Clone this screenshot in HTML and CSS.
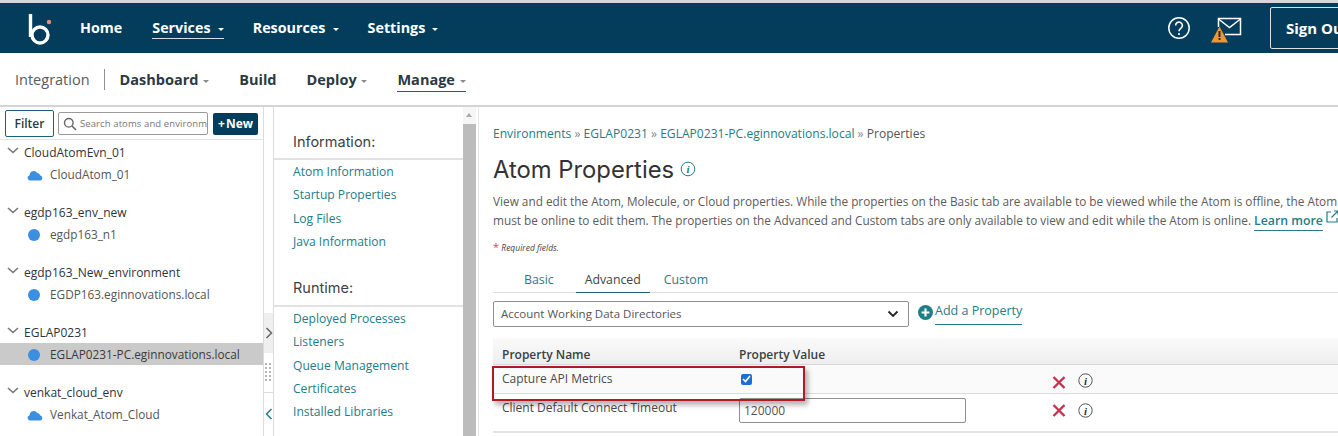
FILE: index.html
```html
<!DOCTYPE html>
<html lang="en">
<head>
<meta charset="utf-8">
<title>Atom Properties</title>
<link rel="stylesheet" href="styles.css">
</head>
<body>
<div class="page">
  <header class="topbar">
    <svg class="logo" width="28" height="32" viewBox="0 0 28 32" aria-hidden="true">
      <path d="M3.5 1v23" fill="none" stroke="#fff" stroke-width="3.4"/>
      <circle cx="13" cy="22" r="8" fill="none" stroke="#fff" stroke-width="3.4"/>
      <circle cx="22" cy="9" r="2.2" fill="#f08a78"/>
    </svg>
    <nav class="mainnav">
      <a class="mainlink">Home</a>
      <a class="mainlink mainlink-active">Services <i class="caret"></i></a>
      <a class="mainlink">Resources <i class="caret"></i></a>
      <a class="mainlink">Settings <i class="caret"></i></a>
    </nav>
    <div class="topright">
      <svg class="help" width="24" height="24" viewBox="0 0 24 24" aria-hidden="true">
        <circle cx="12" cy="12" r="10.2" fill="none" stroke="#fff" stroke-width="1.5"/>
        <path d="M8.6 9.4a3.4 3.4 0 1 1 5.4 2.8c-1.3.9-2 1.5-2 3" fill="none" stroke="#fff" stroke-width="1.6"/>
        <circle cx="12" cy="18" r="1.1" fill="#fff"/>
      </svg>
      <svg class="mail" width="32" height="28" viewBox="0 0 32 28" aria-hidden="true">
        <path d="M7.5 11V2.500h22v16H14" fill="none" stroke="#fff" stroke-width="1.500"/>
        <path d="M7.500 3l11 8.500 11-8.500" fill="none" stroke="#fff" stroke-width="1.500"/>
        <path d="M8.500 10.500L17 26.500H0z" fill="#f0962e"/>
        <rect x="7.500" y="15" width="2" height="6" fill="#2b2b2b"/>
        <rect x="7.500" y="22" width="2" height="2" fill="#2b2b2b"/>
      </svg>
      <a class="signout">Sign Out</a>
    </div>
  </header>

  <nav class="subnav">
    <span class="product">Integration</span>
    <a class="sublink sublink-first">Dashboard <i class="caret caret-gray"></i></a>
    <a class="sublink">Build</a>
    <a class="sublink">Deploy <i class="caret caret-gray"></i></a>
    <a class="sublink sublink-active">Manage <i class="caret caret-gray"></i></a>
  </nav>

  <main class="workspace">
    <aside class="sidebar">
      <div class="toolbar">
        <button class="filter">Filter</button>
        <div class="search">
          <svg width="14" height="14" viewBox="0 0 14 14" aria-hidden="true"><circle cx="5.800" cy="5.800" r="4.300" fill="none" stroke="#666" stroke-width="1.400"/><path d="M9 9l4 4" stroke="#666" stroke-width="1.600"/></svg>
          <span class="search-text">Search atoms and environm</span>
        </div>
        <button class="new"><span class="plus">+</span>New</button>
      </div>
      <ul class="tree">
        <li class="group">
          <div class="env"><svg class="chev" width="12" height="7" viewBox="0 0 12 7"><path d="M1 1l5 4.500L11 1" fill="none" stroke="#777" stroke-width="1.600"/></svg>CloudAtomEvn_01</div>
          <div class="atom"><svg class="cloud" width="16" height="11" viewBox="0 0 16 11"><path d="M3 10.500a2.700 2.700 0 0 1-.4-5.300A4.200 4.200 0 0 1 10.300 3a3.600 3.600 0 0 1 3 2.600 2.500 2.500 0 0 1 0 4.900z" fill="#3b8fe0"/></svg>CloudAtom_01</div>
        </li>
        <li class="group">
          <div class="env"><svg class="chev" width="12" height="7" viewBox="0 0 12 7"><path d="M1 1l5 4.500L11 1" fill="none" stroke="#777" stroke-width="1.600"/></svg>egdp163_env_new</div>
          <div class="atom"><span class="dot"></span>egdp163_n1</div>
        </li>
        <li class="group">
          <div class="env"><svg class="chev" width="12" height="7" viewBox="0 0 12 7"><path d="M1 1l5 4.500L11 1" fill="none" stroke="#777" stroke-width="1.600"/></svg>egdp163_New_environment</div>
          <div class="atom"><span class="dot"></span>EGDP163.eginnovations.local</div>
        </li>
        <li class="group">
          <div class="env"><svg class="chev" width="12" height="7" viewBox="0 0 12 7"><path d="M1 1l5 4.500L11 1" fill="none" stroke="#777" stroke-width="1.600"/></svg>EGLAP0231</div>
          <div class="atom atom-selected"><span class="dot"></span>EGLAP0231-PC.eginnovations.local</div>
        </li>
        <li class="group">
          <div class="env"><svg class="chev" width="12" height="7" viewBox="0 0 12 7"><path d="M1 1l5 4.500L11 1" fill="none" stroke="#777" stroke-width="1.600"/></svg>venkat_cloud_env</div>
          <div class="atom"><svg class="cloud" width="16" height="11" viewBox="0 0 16 11"><path d="M3 10.500a2.700 2.700 0 0 1-.4-5.300A4.200 4.200 0 0 1 10.300 3a3.600 3.600 0 0 1 3 2.600 2.500 2.500 0 0 1 0 4.900z" fill="#3b8fe0"/></svg>Venkat_Atom_Cloud</div>
        </li>
      </ul>
    </aside>

    <div class="splitter">
      <div class="split-top"></div>
      <div class="split-expand"><svg width="8" height="12" viewBox="0 0 8 12"><path d="M1.500 1l5 5-5 5" fill="none" stroke="#666" stroke-width="1.500"/></svg></div>
      <div class="split-grip"><span class="grip-dots"></span></div>
      <div class="split-collapse"><svg width="8" height="12" viewBox="0 0 8 12"><path d="M6.500 1l-5 5 5 5" fill="none" stroke="#1d7f86" stroke-width="1.500"/></svg></div>
    </div>

    <section class="menu">
      <h2 class="menu-title">Information:</h2>
      <ul class="menu-list">
        <li>Atom Information</li>
        <li>Startup Properties</li>
        <li>Log Files</li>
        <li>Java Information</li>
      </ul>
      <h2 class="menu-title menu-title-next">Runtime:</h2>
      <ul class="menu-list">
        <li>Deployed Processes</li>
        <li>Listeners</li>
        <li>Queue Management</li>
        <li>Certificates</li>
        <li>Installed Libraries</li>
      </ul>
    </section>

    <div class="scrollbar">
      <div class="scroll-up"></div>
      <div class="scroll-thumb"></div>
    </div>

    <section class="content">
      <p class="crumbs"><a>Environments</a> <span class="sep">»</span> <a>EGLAP0231</a> <span class="sep">»</span> <a>EGLAP0231-PC.eginnovations.local</a> <span class="sep">»</span> Properties</p>
      <h1 class="title">Atom Properties
        <svg class="title-info" width="16" height="16" viewBox="0 0 16 16" aria-hidden="true"><circle cx="8" cy="8" r="6.800" fill="none" stroke="#1d7f86" stroke-width="1"/><text x="8" y="12" text-anchor="middle" class="info-i info-i-teal">i</text></svg>
      </h1>
      <p class="desc">View and edit the Atom, Molecule, or Cloud properties. While the properties on the Basic tab are available to be viewed while the Atom is offline, the Atom</p>
      <p class="desc desc-next">must be online to edit them. The properties on the Advanced and Custom tabs are only available to view and edit while the Atom is online. <a class="learn">Learn more</a> <svg class="ext" width="13" height="13" viewBox="0 0 13 13" aria-hidden="true"><path d="M5 2H1v10h10V8" fill="none" stroke="#1d7f86" stroke-width="1.200"/><path d="M5.500 7.500L12 1M8 1h4v4" fill="none" stroke="#1d7f86" stroke-width="1.200"/></svg></p>
      <p class="required"><span class="star">*</span> Required fields.</p>
      <div class="tabs">
        <a class="tab">Basic</a>
        <a class="tab tab-active">Advanced</a>
        <a class="tab">Custom</a>
      </div>
      <div class="addrow">
        <div class="select">Account Working Data Directories
          <svg width="12" height="8" viewBox="0 0 12 8" aria-hidden="true"><path d="M1.500 1.500L6 6l4.500-4.500" fill="none" stroke="#222" stroke-width="1.800"/></svg>
        </div>
        <svg class="addicon" width="15" height="15" viewBox="0 0 15 15" aria-hidden="true"><circle cx="7.500" cy="7.500" r="7.500" fill="#1d7f86"/><path d="M7.500 3.500v8M3.500 7.500h8" stroke="#fff" stroke-width="2.200"/></svg>
        <a class="addlink">Add a Property</a>
      </div>
      <div class="table">
        <div class="row row-head"><span class="c-name">Property Name</span><span class="c-value">Property Value</span></div>
        <div class="row row-one">
          <span class="c-name">Capture API Metrics</span>
          <span class="c-value"><span class="check"><svg width="9" height="8" viewBox="0 0 9 8"><path d="M1 4l2.500 2.500L8 1" fill="none" stroke="#fff" stroke-width="1.700"/></svg></span></span>
          <svg class="cross" width="14" height="13" viewBox="0 0 14 13" aria-hidden="true"><path d="M1.500 1l11 11M12.500 1l-11 11" stroke="#c8324f" stroke-width="2.400"/></svg>
          <svg class="rowinfo" width="15" height="15" viewBox="0 0 15 15" aria-hidden="true"><circle cx="7.500" cy="7.500" r="6.700" fill="none" stroke="#555" stroke-width="1"/><text x="7.500" y="11.500" text-anchor="middle" class="info-i">i</text></svg>
        </div>
        <div class="row row-two">
          <span class="c-name c-name-top">Client Default Connect Timeout</span>
          <span class="c-value"><span class="textbox">120000</span></span>
          <svg class="cross" width="14" height="13" viewBox="0 0 14 13" aria-hidden="true"><path d="M1.500 1l11 11M12.500 1l-11 11" stroke="#c8324f" stroke-width="2.400"/></svg>
          <svg class="rowinfo" width="15" height="15" viewBox="0 0 15 15" aria-hidden="true"><circle cx="7.500" cy="7.500" r="6.700" fill="none" stroke="#555" stroke-width="1"/><text x="7.500" y="11.500" text-anchor="middle" class="info-i">i</text></svg>
        </div>
        <div class="highlight"></div>
      </div>
    </section>
  </main>
</div>
</body>
</html>
```

FILE: styles.css
```css
* { box-sizing: border-box; }
html, body { margin: 0; padding: 0; height: 100%; overflow: hidden; background: #fff; }
body { font-family: "Open Sans", "Liberation Sans", sans-serif; color: #3a3a3a; }
ul { list-style: none; margin: 0; padding: 0; }
h1, h2, p { margin: 0; }
a { color: inherit; text-decoration: none; }

.page { width: 1338px; height: 436px; display: flex; flex-direction: column; border-top: 3px solid #d6d6d6; overflow: hidden; }

.topbar { flex: 0 0 50px; background: #033d5b; display: flex; align-items: center; color: #fff; padding-left: 27px; }
.logo { flex: none; margin-top: 1px; }
.mainnav { display: flex; margin-left: 25px; gap: 29px; }
.mainlink { font-size: 14.3px; font-weight: 700; line-height: 19px; padding-bottom: 1px; border-bottom: 1px solid transparent; white-space: nowrap; }
.mainlink:first-child { margin-right: 1px; }
.mainlink-active { border-bottom-color: #cfe0e8; }
.caret { display: inline-block; width: 0; height: 0; border-left: 3.5px solid transparent; border-right: 3.5px solid transparent; border-top: 3.5px solid currentColor; vertical-align: 2px; margin-left: 3.5px; }
.caret-gray { color: #8a8a8a; margin-left: 1px; }
.topright { margin-left: auto; display: flex; align-items: center; flex: none; width: 171px; }
.help { margin-right: 20px; flex: none; }
.mail { margin-right: 27px; margin-top: 4px; flex: none; }
.signout { flex: none; width: 90px; height: 42px; margin-top: 0; border: 1px solid #d6e2e8; border-radius: 2px; font-size: 15px; font-weight: 700; line-height: 40px; padding-left: 15px; white-space: nowrap; }

.subnav { flex: 0 0 52px; display: flex; align-items: center; padding-left: 15px; font-size: 14.5px; color: #2b3a42; }
.product { font-size: 14.5px; color: #5a5a62; padding-right: 14px; border-right: 1px solid #8f8f8f; line-height: 21px; }
.sublink { font-weight: 700; margin-top: 4px; margin-left: 30px; line-height: 20px; padding: 0 0 1px; border-bottom: 1px solid transparent; white-space: nowrap; }
.sublink-first { margin-left: 15px; }
.sublink-active { border-bottom-color: #1f5f78; }

.workspace { flex: 1; min-height: 0; display: flex; border-top: 2px solid #d4d4d4; }

.sidebar { flex: 0 0 264px; border-right: 1px solid #dcdcdc; overflow: hidden; }
.toolbar { display: flex; align-items: center; height: 33px; padding-left: 5px; border-bottom: 1px solid #e3e3e3; }
.filter { width: 49px; height: 27px; padding: 0; background: #fff; border: 1px solid #1f5f78; border-radius: 2px; font: 600 12px "Open Sans", sans-serif; color: #2b3a42; flex: none; }
.search { width: 150px; height: 23px; margin-left: 4px; margin-top: 1px; border: 1px solid #9a9a9a; border-radius: 2px; display: flex; align-items: center; padding-left: 4px; gap: 3px; overflow: hidden; flex: none; }
.search svg { flex: none; }
.search-text { font-size: 9.5px; color: #777; white-space: nowrap; letter-spacing: .1px; }
.new { width: 45px; height: 22px; margin-left: 5px; margin-top: 1px; padding: 0; background: #033d5b; border: 0; border-radius: 2px; color: #fff; font: 700 12px "Open Sans", sans-serif; flex: none; }
.plus { margin-right: 1px; }

.tree { padding-top: 2px; }
.group { height: 60px; }
.env { display: flex; align-items: center; height: 20px; font-size: 12px; color: #2f3438; font-weight: 500; padding-left: 7px; white-space: nowrap; }
.chev { margin-right: 5px; flex: none; margin-top: -3px; }
.atom { display: flex; align-items: center; height: 22px; margin-top: 1px; font-size: 11.8px; color: #555; padding-left: 27px; white-space: nowrap; }
.atom-selected { background: #cacaca; color: #3a3a3a; }
.dot { width: 12px; height: 12px; border-radius: 50%; background: #3b8fe0; margin: 1px 10px 0 1px; flex: none; }
.cloud { margin-right: 7px; flex: none; margin-top: 2px; }

.splitter { flex: 0 0 10px; display: flex; flex-direction: column; background: #fff; border-right: 1px solid #dcdcdc; }
.split-top { flex: 0 0 206px; }
.split-expand { flex: 0 0 40px; background: #efefef; display: flex; align-items: center; justify-content: center; }
.split-grip { flex: 0 0 40px; padding-top: 9px; border-bottom: 1px solid #dcdcdc; }
.grip-dots { display: block; height: 20px; background-image: radial-gradient(circle, #b5b5b5 1px, transparent 1.2px); background-size: 4px 4px; }
.split-collapse { flex: 1; display: flex; justify-content: center; padding-top: 15px; }

.menu { flex: 0 0 189px; padding-top: 25px; overflow: hidden; }
.menu-title { font: 400 14.5px/20px Inter, "Open Sans", sans-serif; color: #3f3f46; padding: 0 0 6px 19px; border-bottom: 2px solid #e2e2e2; }
.menu-title-next { margin-top: 25px; padding-bottom: 7px; }
.menu-list { padding: 0 0 0 19px; }
.menu-list li { font-size: 12.1px; font-weight: 500; line-height: 23.3px; color: #257c88; white-space: nowrap; }

.scrollbar { flex: 0 0 13px; display: flex; flex-direction: column; margin-right: 3px; background: #f6f6f6; }
.scroll-up { flex: 0 0 17px; position: relative; }
.scroll-up::after { content: ""; position: absolute; left: 3px; top: 6px; border-left: 3.5px solid transparent; border-right: 3.5px solid transparent; border-bottom: 4px solid #aaa; }
.scroll-thumb { flex: 1; background: #bcbcbc; }

.content { flex: 1; min-width: 0; padding: 19px 0 0 14px; border-left: 1px solid #e6e6e6; margin-left: -1px; overflow: hidden; }
.crumbs { font-size: 12.08px; line-height: 16px; color: #555; white-space: nowrap; }
.crumbs a { color: #257c88; }
.sep { color: #888; }
.title { margin-top: 13px; height: 30px; font: 400 23.8px/30px Inter, "Open Sans", sans-serif; color: #333; white-space: nowrap; display: flex; align-items: center; gap: 6px; }
.title-info { margin-top: -2px; }
.info-i { font: italic 700 11px "Liberation Serif", serif; fill: #333; }
.info-i-teal { fill: #1d7f86; }
.desc { margin-top: 7px; height: 18px; font-size: 11.8px; line-height: 18px; color: #5c5c5c; white-space: nowrap; }
.desc-next { margin-top: 0; }
.learn { color: #257c88; font-weight: 600; font-size: 12.3px; border-bottom: 1px solid #257c88; padding-bottom: 1px; }
.ext { vertical-align: 2px; }
.required { margin-top: 12px; height: 14px; font-size: 8.5px; line-height: 14px; font-style: italic; color: #444; }
.star { color: #d8455f; font-size: 11px; font-style: normal; }
.tabs { margin-top: 13px; display: flex; height: 26px; border-bottom: 1px solid #dcdcdc; padding-left: 31px; width: 860px; }
.tab { font-size: 12.3px; line-height: 26px; color: #257c88; white-space: nowrap; }
.tab-active { margin-left: 22px; margin-right: 14px; padding: 0 9px; color: #444; border-bottom: 1px solid #1f5f78; height: 26px; }
.addrow { display: flex; align-items: flex-start; margin-top: 8px; height: 26px; }
.select { flex: none; width: 416px; height: 26px; border: 1px solid #8f8f8f; border-radius: 2px; padding: 0 9px 0 7px; font-size: 11.5px; line-height: 24px; color: #555; display: flex; align-items: center; justify-content: space-between; white-space: nowrap; }
.addicon { flex: none; margin-left: 9px; margin-top: 4px; }
.addlink { margin-left: 2px; margin-top: 1px; font-size: 12.5px; font-weight: 500; color: #257c88; border-bottom: 1px solid #257c88; line-height: 18px; padding-bottom: 4px; white-space: nowrap; }
.table { position: relative; margin-top: 11px; width: 860px; }
.row { display: flex; align-items: center; position: relative; }
.row-head { height: 27px; background: linear-gradient(#fafafa, #eeeeee); border-bottom: 1px solid #d8d8d8; font-size: 12px; font-weight: 600; color: #3a3f44; padding-top: 6px; }
.row-one { height: 29px; background: #fafafa; border-bottom: 1px solid #dcdcdc; font-size: 12px; color: #4a4a4a; }
.row-two { height: 39px; border-bottom: 2px solid #e4e4e4; font-size: 12px; color: #4a4a4a; }
.c-name { flex: 0 0 236px; padding-left: 9px; white-space: nowrap; }
.row-head .c-name { flex-basis: 246px; }
.row-one .c-name { margin-top: -1px; }
.c-name-top { margin-top: -10px; }
.c-value { white-space: nowrap; display: flex; align-items: center; }
.row-one .c-value, .row-two .c-value { flex: 0 0 320px; margin-left: 10px; }
.row-two .c-value { margin-top: -4px; }
.check { width: 11px; height: 11px; margin-left: 2px; background: #1a6fd6; border-radius: 2px; display: flex; align-items: center; justify-content: center; }
.textbox { width: 227px; height: 25px; border: 1px solid #8f8f8f; border-radius: 2px; font-size: 12px; line-height: 23px; padding-left: 4px; color: #555; }
.cross { flex: none; margin-left: -7px; }
.row-one .cross { margin-top: 6px; }
.row-two .cross { margin-top: -4px; }
.rowinfo { flex: none; margin-left: 12px; }
.row-one .rowinfo { margin-top: 3px; }
.row-two .rowinfo { margin-top: -5px; }
.highlight { position: absolute; left: -1px; top: 28px; width: 313px; height: 35px; border: 2px solid #b01a22; box-shadow: 3px 4px 5px rgba(0,0,0,.3); pointer-events: none; }
```
